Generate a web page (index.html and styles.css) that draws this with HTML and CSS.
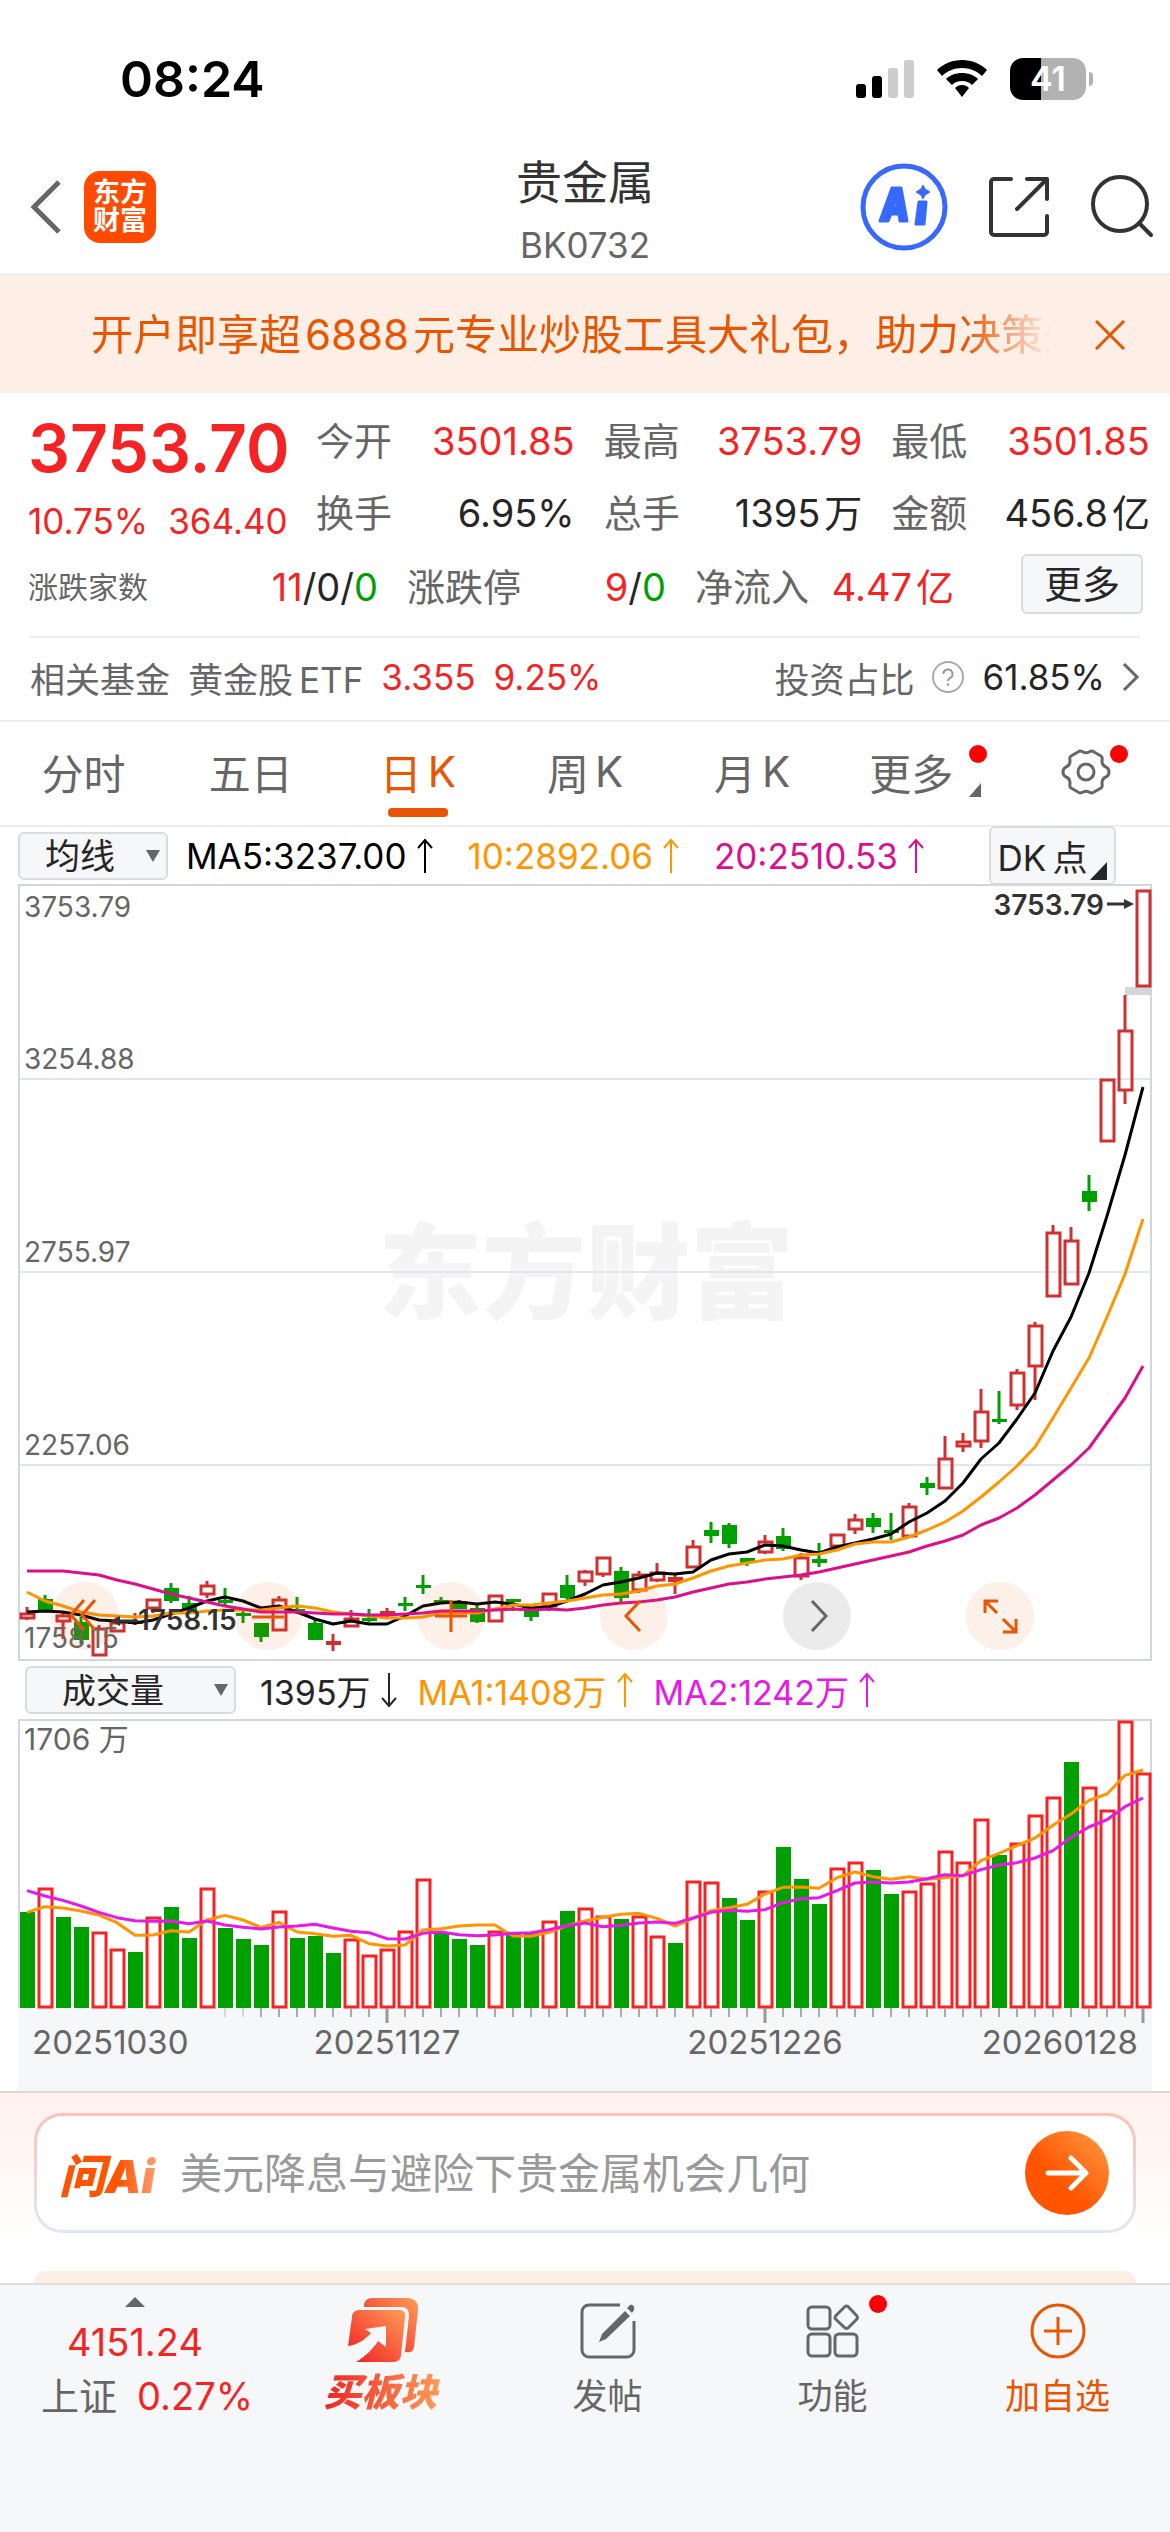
FILE: index.html
```html
<!DOCTYPE html>
<html lang="zh-CN">
<head>
<meta charset="utf-8">
<meta name="viewport" content="width=device-width, initial-scale=1">
<title>贵金属 BK0732</title>
<link rel="stylesheet" href="styles.css">
</head>
<body>
<div class="status">
  <time class="clock">08:24</time>
  <div class="status-icons">
    <svg width="58" height="38" viewBox="0 0 58 38"><rect x="0" y="24" width="10" height="14" rx="3"/><rect x="16" y="16" width="10" height="22" rx="3"/><g fill="#ccc"><rect x="32" y="8" width="10" height="30" rx="3"/><rect x="48" y="0" width="10" height="38" rx="3"/></g></svg>
    <svg width="50" height="37" viewBox="0 0 50 37"><path d="M25 0C15 0 6 4 0 10l5 6c5-5 12-8 20-8s15 3 20 8l5-6C44 4 35 0 25 0zM25 13c-6 0-12 2-16 6l6 6c3-3 6-4 10-4s7 1 10 4l6-6c-4-4-10-6-16-6zM25 25c-3 0-5 1-7 3l7 9 7-9c-2-2-4-3-7-3z"/></svg>
    <div class="battery"><span>41</span></div>
  </div>
</div>

<header class="top">
  <div class="top-left">
    <button class="icon-btn" aria-label="返回"><svg width="32" height="54" viewBox="0 0 32 54" fill="none" stroke="#666" stroke-width="5"><path d="M29 2L4 27l25 25"/></svg></button>
    <a class="brand" href="#">东方<br>财富</a>
  </div>
  <div class="title">
    <h1>贵金属</h1>
    <p>BK0732</p>
  </div>
  <div class="top-right">
    <button class="icon-btn ai" aria-label="Ai"><svg width="88" height="88" viewBox="0 0 88 88"><circle cx="44" cy="44" r="41" fill="none" stroke="#3769ff" stroke-width="5"/><g fill="#3769ff" stroke="#3769ff" stroke-width="3" stroke-linejoin="round"><path fill-rule="evenodd" d="M32 25h9l6 33h-7l-1-7h-8l-3 7h-8zM33 44h5l-1-9z"/><path d="M59 39h7l-2 22h-8z"/><path stroke-width="1" d="M63 22l2 4 5 3-5 3-2 4-2-4-5-3 5-3z"/></g></svg></button>
    <button class="icon-btn" aria-label="分享"><svg width="60" height="60" viewBox="0 0 60 60" fill="none" stroke="#333" stroke-width="4" stroke-linecap="round" stroke-linejoin="round"><path d="M22 2H5a3 3 0 0 0-3 3v50a3 3 0 0 0 3 3h50a3 3 0 0 0 3-3V39M38 2h20v20M58 2L28 32"/></svg></button>
    <button class="icon-btn" aria-label="搜索"><svg width="64" height="64" viewBox="0 0 64 64" fill="none" stroke="#333" stroke-width="4" stroke-linecap="round"><circle cx="30" cy="29" r="27"/><path d="M49 48l12 12"/></svg></button>
  </div>
</header>

<section class="banner">
  <a href="#" class="banner-text">开户即享超<span class="gap">6888</span>元专业炒股工具大礼包，助力决策先</a>
  <button class="icon-btn" aria-label="关闭"><svg width="30" height="30" viewBox="0 0 30 30" fill="none" stroke="#ea5504" stroke-width="3"><path d="M1 1l28 28M29 1L1 29"/></svg></button>
</section>

<section class="quote">
  <div class="quote-main">
    <div class="price">
      <strong>3753.70</strong>
      <p><span>10.75%</span><span>364.40</span></p>
    </div>
    <dl class="stats">
      <div><dt>今开</dt><dd class="up">3501.85</dd></div>
      <div><dt>最高</dt><dd class="up">3753.79</dd></div>
      <div><dt>最低</dt><dd class="up">3501.85</dd></div>
      <div><dt>换手</dt><dd>6.95%</dd></div>
      <div><dt>总手</dt><dd>1395<span class="unit">万</span></dd></div>
      <div><dt>金额</dt><dd>456.8<span class="unit">亿</span></dd></div>
    </dl>
  </div>
  <div class="breadth">
    <dl>
      <div class="b-wide"><dt class="small">涨跌家数</dt><dd><span class="up">11</span>/0/<span class="down">0</span></dd></div>
      <div class="b-mid"><dt>涨跌停</dt><dd><span class="up">9</span>/<span class="down">0</span></dd></div>
      <div class="b-mid"><dt>净流入</dt><dd class="up">4.47<span class="unit">亿</span></dd></div>
    </dl>
    <button class="more">更多</button>
  </div>
  <div class="fund">
    <span class="mute">相关基金</span>
    <a class="mute" href="#">黄金股<span class="etf">ETF</span></a>
    <span class="up">3.355</span>
    <span class="up">9.25%</span>
    <a class="ratio" href="#"><span class="mute">投资占比</span><svg width="34" height="34" viewBox="0 0 34 34"><circle cx="17" cy="17" r="15" fill="none" stroke="#aaa" stroke-width="2"/><path d="M12.500 14a4.500 4.500 0 1 1 6.500 4c-1.500.8-2 1.500-2 3" fill="none" stroke="#999" stroke-width="2"/><circle cx="17" cy="24.500" r="1.300" fill="#999"/></svg><span>61.85%</span><svg width="18" height="30" viewBox="0 0 18 30" fill="none" stroke="#666" stroke-width="3"><path d="M2 2l13 13L2 28"/></svg></a>
  </div>
</section>

<nav class="tabs">
  <button>分时</button>
  <button>五日</button>
  <button class="active">日<span>K</span></button>
  <button>周<span>K</span></button>
  <button>月<span>K</span></button>
  <button class="tab-more">更多<i class="dot"></i><svg class="corner" width="12" height="14" viewBox="0 0 12 14"><path fill="#666" d="M12 0v14H0z"/></svg></button>
  <button class="tab-set" aria-label="设置"><svg width="50" height="50" viewBox="0 0 50 46" fill="none" stroke="#666" stroke-width="3" stroke-linejoin="round"><path d="M17 3c2-2 3-1 5 0 2 1 4 1 6 0s3-2 5 0l7 4c2 1 1 3 1 5 0 3 1 5 4 6 2 1 3 2 3 5s-1 4-3 5c-3 1-4 3-4 6 0 2 1 4-1 5l-7 4c-2 2-3 1-5 0s-4-1-6 0-3 2-5 0l-7-4c-2-1-1-3-1-5 0-3-1-5-4-6-2-1-3-2-3-5s1-4 3-5c3-1 4-3 4-6 0-2-1-4 1-5z"/><circle cx="25" cy="23" r="8"/></svg><i class="dot"></i></button>
</nav>

<section class="indicators">
  <label class="picker short"><select aria-label="主图指标"><option>均线</option></select></label>
  <span class="ma ma5">MA5:3237.00<svg class="arrow" viewBox="0 0 18 36"><path d="M9 35V2M2 10l7-8 7 8"/></svg></span>
  <span class="ma ma10">10:2892.06<svg class="arrow" viewBox="0 0 18 36"><path d="M9 35V2M2 10l7-8 7 8"/></svg></span>
  <span class="ma ma20">20:2510.53<svg class="arrow" viewBox="0 0 18 36"><path d="M9 35V2M2 10l7-8 7 8"/></svg></span>
  <button class="dk">DK<span>点</span><svg class="corner" width="17" height="18" viewBox="0 0 17 18"><path fill="#262626" d="M17 0v18H0z"/></svg></button>
</section>

<section class="kline">
  <svg id="kline" viewBox="18 884 1134 777" role="img" aria-label="日K线"></svg>
  <div class="tools">
    <button aria-label="最早"><svg viewBox="0 0 68 68"><path d="M33 18L20 33l13 15M44 18L31 33l13 15"/></svg></button>
    <button aria-label="缩小"><svg viewBox="0 0 68 68"><path d="M18 35h32"/></svg></button>
    <button aria-label="放大"><svg viewBox="0 0 68 68"><path d="M18 34h32M34 18v32"/></svg></button>
    <button aria-label="上一根"><svg viewBox="0 0 68 68"><path d="M40 19L26 34l14 15"/></svg></button>
    <button class="off" aria-label="下一根"><svg viewBox="0 0 68 68"><path d="M29 19l14 15-14 15"/></svg></button>
    <button aria-label="全屏"><svg viewBox="0 0 68 68"><path d="M19 31V19h13M19 19l12 12M37 37l13 13M37 50h13V37"/></svg></button>
  </div>
</section>

<section class="indicators vol-head">
  <label class="picker long"><select aria-label="副图指标"><option>成交量</option></select></label>
  <span class="ma vol">1395万<svg class="arrow" viewBox="0 0 18 36"><path d="M9 1v33M2 26l7 8 7-8"/></svg></span>
  <span class="ma ma10">MA1:1408万<svg class="arrow" viewBox="0 0 18 36"><path d="M9 35V2M2 10l7-8 7 8"/></svg></span>
  <span class="ma ma-b">MA2:1242万<svg class="arrow" viewBox="0 0 18 36"><path d="M9 35V2M2 10l7-8 7 8"/></svg></span>
</section>

<section class="volume">
  <svg id="volume" viewBox="18 1719 1134 372" role="img" aria-label="成交量"></svg>
</section>

<section class="ask">
  <form class="ask-box">
    <label for="q" class="ask-logo">问Ai</label>
    <input id="q" type="text" placeholder="美元降息与避险下贵金属机会几何">
    <button type="button" aria-label="发送"><svg width="44" height="38" viewBox="0 0 44 38" fill="none" stroke="#fff" stroke-width="5" stroke-linecap="round" stroke-linejoin="round"><path d="M3 19h37M26 4l15 15-15 15"/></svg></button>
  </form>
  <div class="peek"></div>
</section>

<footer class="bar">
  <a class="index" href="#">
    <svg width="20" height="10" viewBox="0 0 20 10"><path fill="#666" d="M10 0l10 10H0z"/></svg>
    <span class="up">4151.24</span>
    <span class="pair">上证<span class="up">0.27%</span></span>
  </a>
  <a class="buy" href="#">
    <svg width="72" height="66" viewBox="0 0 72 66"><defs><linearGradient id="warm" x1="0" y1="1" x2="1" y2="0"><stop offset="0" stop-color="#ee1c24"/><stop offset="1" stop-color="#ff9d57"/></linearGradient></defs><path fill="url(#warm)" d="M17 9c0-5 3-8 8-8h35c8 0 12 5 11 12l-4 37c-1 5-4 6-9 5l4-36c0-6-2-9-8-9H17z"/><path fill="url(#warm)" fill-rule="evenodd" d="M12 13h40c5 0 7 3 6 7l-4 38c-1 5-3 7-8 7H9c10-6 17-13 22-21l8 6V29l-21 3 6 4C18 43 10 48 1 49l4-29c0-4 3-7 7-7z"/></svg>
    <span>买板块</span>
  </a>
  <a href="#">
    <svg width="56" height="56" viewBox="0 0 56 56"><path d="M40 2H9a7 7 0 0 0-7 7v38a7 7 0 0 0 7 7h38a7 7 0 0 0 7-7V18" fill="none" stroke="#666" stroke-width="3"/><path fill="#666" d="M45 8l5 5-24 23-7 3 3-8zM50 2c3-1 5 2 4 5l-2 3-5-5z"/></svg>
    <span>发帖</span>
  </a>
  <a href="#">
    <svg width="56" height="56" viewBox="0 0 56 56" fill="none" stroke="#666" stroke-width="3"><rect x="3" y="4" width="22" height="22" rx="4"/><rect x="3" y="31" width="22" height="22" rx="4"/><rect x="30" y="31" width="22" height="22" rx="4"/><path stroke-linejoin="round" d="M40 3.500q1.500-1 3 0L52 13q1 1.500 0 3l-9 9q-1.500 1-3 0l-9.500-9q-1-1.500 0-3z"/></svg>
    <i class="dot"></i>
    <span>功能</span>
  </a>
  <a class="add" href="#">
    <svg width="56" height="56" viewBox="0 0 56 56" fill="none" stroke="#ea5504" stroke-width="3"><circle cx="28" cy="28" r="26"/><path d="M14 28h28M28 14v28"/></svg>
    <span>加自选</span>
  </a>
</footer>
<script src="chart.js"></script>
</body>
</html>
```

FILE: styles.css
```css
* { box-sizing: border-box; margin: 0; padding: 0; }
body {
  min-height: 100vh;
  display: flex;
  flex-direction: column;
  background: #fff;
  color: #262626;
  font-family: Inter, "Noto Sans CJK SC", sans-serif;
}
svg { display: block; }
a { color: inherit; text-decoration: none; }
button, input, select { font: inherit; color: inherit; border: 0; background: none; appearance: none; }
button { cursor: pointer; white-space: nowrap; }
.up { color: #f52323; }
.down { color: #00a000; }
.mute { color: #666; }
.dot { width: 18px; height: 18px; border-radius: 50%; background: #f00; position: absolute; }
.icon-btn { display: flex; flex: none; }

.status {
  display: flex;
  justify-content: space-between;
  align-items: center;
  height: 141px;
  padding: 16px 84px 0 120px;
  color: #000;
}
.clock { font-size: 50px; font-weight: 600; }
.status-icons { display: flex; align-items: center; gap: 23px; }
.battery {
  position: relative;
  width: 76px;
  height: 42px;
  border-radius: 13px;
  background: linear-gradient(90deg, #000 41%, #b2b2b2 41%);
  color: #fff;
  font-size: 34px;
  font-weight: 600;
  line-height: 42px;
  text-align: center;
}
.battery::after {
  content: "";
  position: absolute;
  left: 79px;
  top: 14px;
  width: 4px;
  height: 14px;
  border-radius: 0 4px 4px 0;
  background: #b2b2b2;
}

.top {
  display: grid;
  grid-template-columns: 1fr auto 1fr;
  align-items: center;
  height: 135px;
  padding: 0 16px;
  border-bottom: 3px solid #eee;
}
.top-left { display: flex; align-items: center; gap: 22px; padding-left: 14px; }
.brand {
  width: 72px;
  height: 72px;
  padding-top: 8px;
  border-radius: 16px;
  background: #ff4a00;
  color: #fff;
  font-size: 27px;
  font-weight: 700;
  line-height: 28px;
  text-align: center;
}
.title { padding-top: 10px; text-align: center; color: #333; }
.title h1 { font-size: 46px; font-weight: 400; line-height: 62px; }
.title p { margin-top: 4px; font-size: 35px; line-height: 56px; color: #666; }
.top-right { display: flex; align-items: center; justify-content: flex-end; gap: 41px; }

.banner {
  display: flex;
  align-items: center;
  justify-content: space-between;
  height: 117px;
  padding: 0 45px 0 91px;
  background: #fdeee6;
}
.banner-text {
  flex: 0 1 960px;
  overflow: hidden;
  padding-bottom: 6px;
  white-space: nowrap;
  font-size: 42px;
  color: #ea5504;
  mask-image: linear-gradient(90deg, #000 91%, transparent);
}
.gap { margin: 0 4px; }

.quote { border-bottom: 2px solid #eee; }
.quote-main { display: grid; grid-template-columns: 288px 1fr; padding: 12px 20px 0 28px; }
.price strong { display: block; font-size: 66px; font-weight: 600; line-height: 86px; color: #f52323; }
.price p { display: flex; gap: 20px; font-size: 35px; line-height: 60px; color: #f52323; }
dl { font-size: 38px; }
dl div { display: flex; justify-content: space-between; align-items: center; }
dt { color: #666; }
dt.small { font-size: 30px; }
.stats { display: grid; grid-template-columns: repeat(3, 1fr); grid-auto-rows: 72px; column-gap: 29px; line-height: 72px; }
.unit { margin-left: 4px; }
.breadth { display: flex; justify-content: space-between; align-items: center; height: 72px; padding: 0 27px 0 28px; }
.breadth dl { display: flex; gap: 29px; line-height: 72px; }
.b-wide { width: 350px; }
.b-mid { width: 259px; }
.more {
  width: 122px;
  height: 60px;
  margin-bottom: 6px;
  border: 2px solid #d9dbe0;
  border-radius: 6px;
  background: #f6f7f9;
  font-size: 38px;
  line-height: 54px;
}
.fund {
  display: flex;
  align-items: center;
  gap: 18px;
  height: 84px;
  margin: 13px 30px 0;
  padding-bottom: 4px;
  border-top: 2px solid #eee;
  font-size: 35px;
}
.etf { margin-left: 6px; }
.ratio { display: flex; align-items: center; gap: 17px; margin-left: auto; }

.tabs {
  display: grid;
  grid-template-columns: repeat(7, 1fr);
  height: 105px;
  border-bottom: 2px solid #eee;
  font-size: 42px;
  color: #666;
}
.tabs button { position: relative; display: flex; justify-content: center; align-items: center; padding-bottom: 4px; }
.tabs span { margin-left: 6px; }
.tabs .active { color: #ea5504; }
.tabs .active::after {
  content: "";
  position: absolute;
  bottom: 8px;
  width: 60px;
  height: 9px;
  border-radius: 4px;
  background: #ea5504;
}
.tabs .tab-more { padding-right: 16px; }
.tab-more .dot, .tab-set .dot { top: 23px; right: 42px; }
.tab-more .dot { right: 16px; }
.tab-more .corner { position: absolute; right: 22px; bottom: 28px; }

.indicators {
  position: relative;
  display: flex;
  align-items: center;
  height: 57px;
  padding: 0 54px 0 18px;
  font-size: 35px;
  white-space: nowrap;
}
.ma { display: flex; align-items: center; gap: 9px; }
.arrow { width: 18px; height: 36px; fill: none; stroke: currentColor; stroke-width: 2; }
.picker { position: relative; flex: none; }
.picker select {
  display: block;
  width: 100%;
  height: 48px;
  border: 2px solid #d9dbe0;
  border-radius: 6px;
  background: #f6f7f9;
}
.picker::after {
  content: "";
  position: absolute;
  top: 18px;
  right: 8px;
  border: 7px solid transparent;
  border-top: 12px solid #666;
  border-bottom: 0;
}
.short { width: 150px; margin-right: 18px; }
.short select { padding-left: 25px; }
.long { width: 211px; margin-right: 24px; }
.long select { padding-left: 35px; }
.ma5 { color: #000; margin-right: 34px; }
.ma10 { color: #ff9500; margin-right: 34px; }
.ma20 { color: #dc0f8c; }
.ma-b { color: #e619e6; }
.dk {
  position: relative;
  width: 127px;
  height: 59px;
  margin-left: auto;
  padding-right: 20px;
  border: 2px solid #d9dbe0;
  border-radius: 6px;
  background: #f6f7f9;
}
.dk span { margin-left: 6px; }
.dk .corner { position: absolute; right: 7px; bottom: 3px; }
.vol-head { height: 58px; padding-left: 25px; font-size: 34px; }
.vol { margin-right: 20px; }
.vol-head .ma10 { margin-right: 20px; }

.kline { position: relative; margin: 0 18px; }
.kline > svg, .volume > svg { width: 100%; height: auto; }
.tools { position: absolute; left: 33px; bottom: 11px; display: flex; gap: 115px; }
.tools button { width: 68px; height: 68px; border-radius: 50%; background: rgba(234, 85, 4, .09); }
.tools svg { fill: none; stroke: #ea5504; stroke-width: 3; }
.tools .off { background: #ebebeb; }
.tools .off svg { stroke: #666; }
.volume { margin: 0 18px; }
svg text { font-family: Inter, "Noto Sans CJK SC", sans-serif; fill: #666; }
svg .label { font-size: 28px; }
svg .label-v { font-size: 30px; }
svg .label-b { font-size: 28px; font-weight: 600; fill: #333; }
svg .axis { font-size: 33px; }
svg .water { font-size: 104px; font-weight: 900; fill: #f4f4f5; }

.ask {
  padding: 20px 34px 0;
  border-top: 2px solid #d8d9dd;
  background: linear-gradient(#fff1ec, #fff 80%);
}
.ask-box {
  display: flex;
  align-items: center;
  height: 120px;
  padding: 0 24px 0 22px;
  border: 3px solid transparent;
  border-radius: 28px;
  background: linear-gradient(#fff, #fff) padding-box, linear-gradient(#ffc0b5, #dfe7f6) border-box;
}
.ask-logo {
  flex: none;
  width: 121px;
  font-size: 46px;
  font-weight: 900;
  font-style: italic;
  color: transparent;
  background: linear-gradient(90deg, #ff5500 50%, #ff9d70 80%);
  background-clip: text;
}
.ask-box input { flex: 1; min-width: 0; height: 80px; font-size: 42px; outline: 0; }
.ask-box input::placeholder { color: #999; }
.ask-box button {
  display: flex;
  justify-content: center;
  align-items: center;
  width: 84px;
  height: 84px;
  border-radius: 50%;
  background: linear-gradient(45deg, #ff5500 40%, #ff9d45);
}
.peek { height: 12px; margin-top: 38px; border-radius: 28px 28px 0 0; background: #fdeee6; }

.bar {
  flex: 1;
  display: grid;
  grid-template-columns: 6fr 5fr 5fr 5fr 5fr;
  align-items: start;
  border-top: 2px solid #dcdde0;
  background: #f6f7f9;
  font-size: 35px;
  line-height: 50px;
  color: #666;
}
.bar a { position: relative; display: flex; flex-direction: column; align-items: center; gap: 12px; padding-top: 18px; }
.bar .index { gap: 8px; padding: 12px 0 0; font-size: 38px; line-height: 46px; }
.bar .index svg { margin-bottom: 4px; }
.pair { display: flex; gap: 20px; padding-left: 24px; }
.bar .dot { top: 10px; left: 149px; }
.bar .add { color: #ea5504; }
.bar .buy { gap: 4px; padding-top: 12px; }
.buy span {
  padding-right: 4px;
  font-size: 38px;
  font-weight: 900;
  font-style: italic;
  color: transparent;
  background: linear-gradient(90deg, #ee2424, #ff9d57);
  background-clip: text;
}
```

FILE: chart.js
```js
const UP = '#d03030', DOWN = '#00a000', VOL_UP = '#f52323';
const x = i => 27 + 18 * i;

// [rising, high, body top, body bottom, low] per session, as y positions
const candles = [
[1,1607,1613,1619,1620],[0,1595,1599,1610,1612],[1,1613,1615,1622,1639],[0,1617,1622,1640,1644],[1,1625,1628,1656,1656],
[1,1615,1622,1632,1632],[1,1613,1621,1624,1625],[1,1599,1599,1609,1613],[0,1583,1588,1601,1603],[0,1596,1603,1610,1612],
[1,1581,1585,1595,1598],[0,1588,1600,1602,1606],[0,1610,1613,1615,1623],[0,1623,1623,1637,1642],[1,1596,1599,1631,1631],
[0,1597,1609,1611,1614],[0,1619,1623,1640,1640],[1,1634,1641,1645,1651],[1,1610,1618,1627,1627],[0,1609,1618,1620,1622],
[1,1608,1611,1615,1619],[0,1597,1603,1605,1611],[0,1575,1585,1587,1594],[0,1597,1600,1602,1604],[0,1600,1601,1609,1609],
[0,1604,1608,1622,1623],[1,1595,1595,1622,1622],[0,1599,1599,1601,1611],[0,1608,1608,1617,1621],[1,1593,1593,1607,1611],
[0,1575,1585,1598,1599],[1,1570,1571,1582,1586],[1,1557,1557,1575,1577],[0,1567,1571,1598,1602],[1,1571,1574,1591,1593],
[1,1563,1572,1581,1582],[1,1573,1577,1582,1594],[1,1540,1546,1568,1568],[0,1522,1530,1536,1543],[0,1523,1525,1544,1548],
[0,1558,1558,1563,1566],[1,1535,1541,1553,1554],[0,1528,1536,1549,1551],[1,1553,1557,1577,1580],[0,1543,1559,1563,1567],
[1,1534,1534,1547,1547],[1,1514,1519,1530,1534],[0,1513,1518,1527,1533],[0,1513,1530,1533,1540],[1,1503,1506,1537,1537],
[0,1477,1483,1488,1495],[1,1436,1458,1489,1489],[1,1433,1441,1447,1452],[1,1389,1411,1442,1448],[0,1391,1419,1422,1424],
[1,1369,1372,1406,1410],[1,1322,1325,1367,1400],[1,1225,1232,1297,1297],[1,1227,1240,1285,1285],[0,1175,1191,1202,1211],
[1,1079,1079,1142,1142],[1,995,1030,1091,1104],[1,890,890,987,987]];

const ma5 = [1612,1611,1612,1615,1620,1621,1623,1620,1614,1608,1601,1597,1601,1608,1606,1612,1619,1624,1621,1624,1624,1616,1606,1603,1602,1604,1602,1604,1608,1607,1601,1594,1585,1582,1578,1573,1574,1572,1560,1554,1552,1545,1546,1550,1553,1547,1543,1539,1534,1522,1513,1501,1483,1459,1443,1419,1393,1351,1317,1273,1216,1155,1087];
const ma10 = [1592,1601,1606,1612,1615,1616,1617,1616,1613,1613,1611,1610,1610,1610,1608,1606,1608,1612,1614,1616,1618,1618,1617,1613,1613,1613,1609,1605,1605,1603,1601,1598,1595,1594,1591,1586,1584,1578,1571,1566,1563,1560,1559,1555,1554,1550,1544,1542,1542,1537,1530,1522,1511,1497,1482,1466,1447,1418,1388,1358,1317,1274,1219];
const ma20 = [1571,1571,1571,1573,1575,1580,1584,1589,1594,1598,1602,1606,1609,1612,1612,1612,1613,1614,1614,1615,1615,1614,1613,1611,1611,1611,1610,1609,1610,1609,1610,1608,1605,1603,1602,1600,1597,1592,1588,1584,1582,1579,1577,1575,1572,1568,1564,1560,1556,1552,1546,1541,1535,1525,1518,1508,1495,1480,1465,1448,1423,1398,1366];

// Tops of the volume bars, and the sessions whose bar is a falling one
const volumes = [1912,1888,1917,1927,1932,1949,1952,1917,1907,1938,1888,1928,1939,1945,1911,1938,1936,1953,1939,1955,1949,1931,1879,1933,1939,1945,1931,1934,1933,1921,1911,1908,1916,1919,1916,1936,1943,1881,1882,1898,1920,1891,1847,1879,1904,1868,1862,1870,1894,1891,1883,1851,1862,1819,1855,1843,1815,1797,1762,1787,1810,1721,1773];
const falling = new Set([0,2,3,6,8,9,11,12,13,15,16,17,23,24,25,27,28,30,33,36,39,40,42,43,44,47,48,54,58]);
// Volume averages, in thirds of a unit above an origin of 1700
const third = v => 1700 + v / 3;
const volMa1 = [637,620,624,633,645,668,706,705,692,696,660,646,660,682,667,696,701,709,706,731,738,735,690,686,678,675,675,708,709,697,677,663,652,643,640,655,678,655,632,623,613,582,562,561,565,533,516,530,538,530,538,533,527,482,460,437,414,376,342,301,282,226,210].map(third);
const volMa2 = [572,588,601,618,637,653,662,664,663,671,663,675,682,687,681,678,673,684,694,698,716,717,700,696,704,707,705,700,698,689,677,669,680,676,669,666,670,654,637,631,634,629,608,596,593,572,549,546,549,546,536,524,527,509,495,488,474,452,412,381,359,320,294].map(third);

const line = (pts, color) => `<polyline fill="none" stroke="${color}" stroke-width="3" stroke-linejoin="round" points="${pts.map((y, i) => x(i) + ',' + y).join(' ')}"/>`;
const text = (tx, ty, s, cls, anchor = 'start') => `<text x="${tx}" y="${ty}" class="${cls}" text-anchor="${anchor}">${s}</text>`;
const rule = (x1, y1, x2, y2, color, w = 2) => `<path d="M${x1} ${y1}L${x2} ${y2}" stroke="${color}" stroke-width="${w}"/>`;

let k = text(586, 1311, '东方财富', 'water', 'middle');
[1079, 1272, 1465].forEach(y => k += rule(18, y, 1152, y, '#e4e6ee'));
k += '<path d="M19 1661V885H1151V1660H18" fill="none" stroke="#d3d6db" stroke-width="2"/>';
k += '<rect x="1125" y="987" width="27" height="8" fill="#d3d6db"/>';
candles.forEach(([up, hi, top, bot, lo], i) => {
  const c = up ? UP : DOWN, cx = x(i);
  k += rule(cx, hi, cx, top, c, 3) + rule(cx, bot, cx, lo, c, 3);
  if (up && bot - top > 5) k += `<rect x="${cx - 6}" y="${top + 1}" width="13" height="${bot - top - 2}" fill="none" stroke="${c}" stroke-width="3"/>`;
  else k += `<rect x="${cx - 7}" y="${top}" width="15" height="${Math.max(bot - top, 3)}" fill="${c}"/>`;
});
k += line(ma5, '#000') + line(ma10, '#ff9500') + line(ma20, '#dc0f8c');
[['3753.79', 917], ['3254.88', 1069], ['2755.97', 1262], ['2257.06', 1455], ['1758.15', 1648]].forEach(([s, y]) => k += text(24, y, s, 'label'));
k += text(1104, 915, '3753.79', 'label-b', 'end') + rule(1107, 904, 1126, 904, '#333', 3) + '<path d="M1124 899l10 5-10 5z" fill="#333"/>';
k += text(138, 1630, '1758.15', 'label-b') + rule(118, 1621, 138, 1621, '#333', 3) + '<path d="M120 1616l-10 5 10 5z" fill="#333"/>';
document.getElementById('kline').innerHTML = k;

let v = '<rect x="18" y="2008" width="1134" height="83" fill="#f6f7f9"/><path d="M19 2008V1720H1151V2008" fill="none" stroke="#d3d6db" stroke-width="2"/>';
volumes.forEach((top, i) => {
  const cx = x(i);
  v += falling.has(i)
    ? `<rect x="${cx - 7}" y="${top}" width="15" height="${2008 - top}" fill="${DOWN}"/>`
    : `<rect x="${cx - 6}" y="${top + 1}" width="13" height="${2006 - top}" fill="#fff" stroke="${VOL_UP}" stroke-width="3"/>`;
  if (i > 10) v += i === 20 || i === 41 || i === 62 ? rule(cx, 2008, cx, 2023, '#999', 3) : rule(cx, 2008, cx, 2017, i < 13 ? '#d5d5d8' : '#aaa');
});
v += line(volMa1, '#ff9500') + line(volMa2, '#e619e6');
v += text(24, 1750, '1706 万', 'label-v');
v += text(32, 2054, '20251030', 'axis') + text(387, 2054, '20251127', 'axis', 'middle') + text(765, 2054, '20251226', 'axis', 'middle') + text(1138, 2054, '20260128', 'axis', 'end');
document.getElementById('volume').innerHTML = v;
```
